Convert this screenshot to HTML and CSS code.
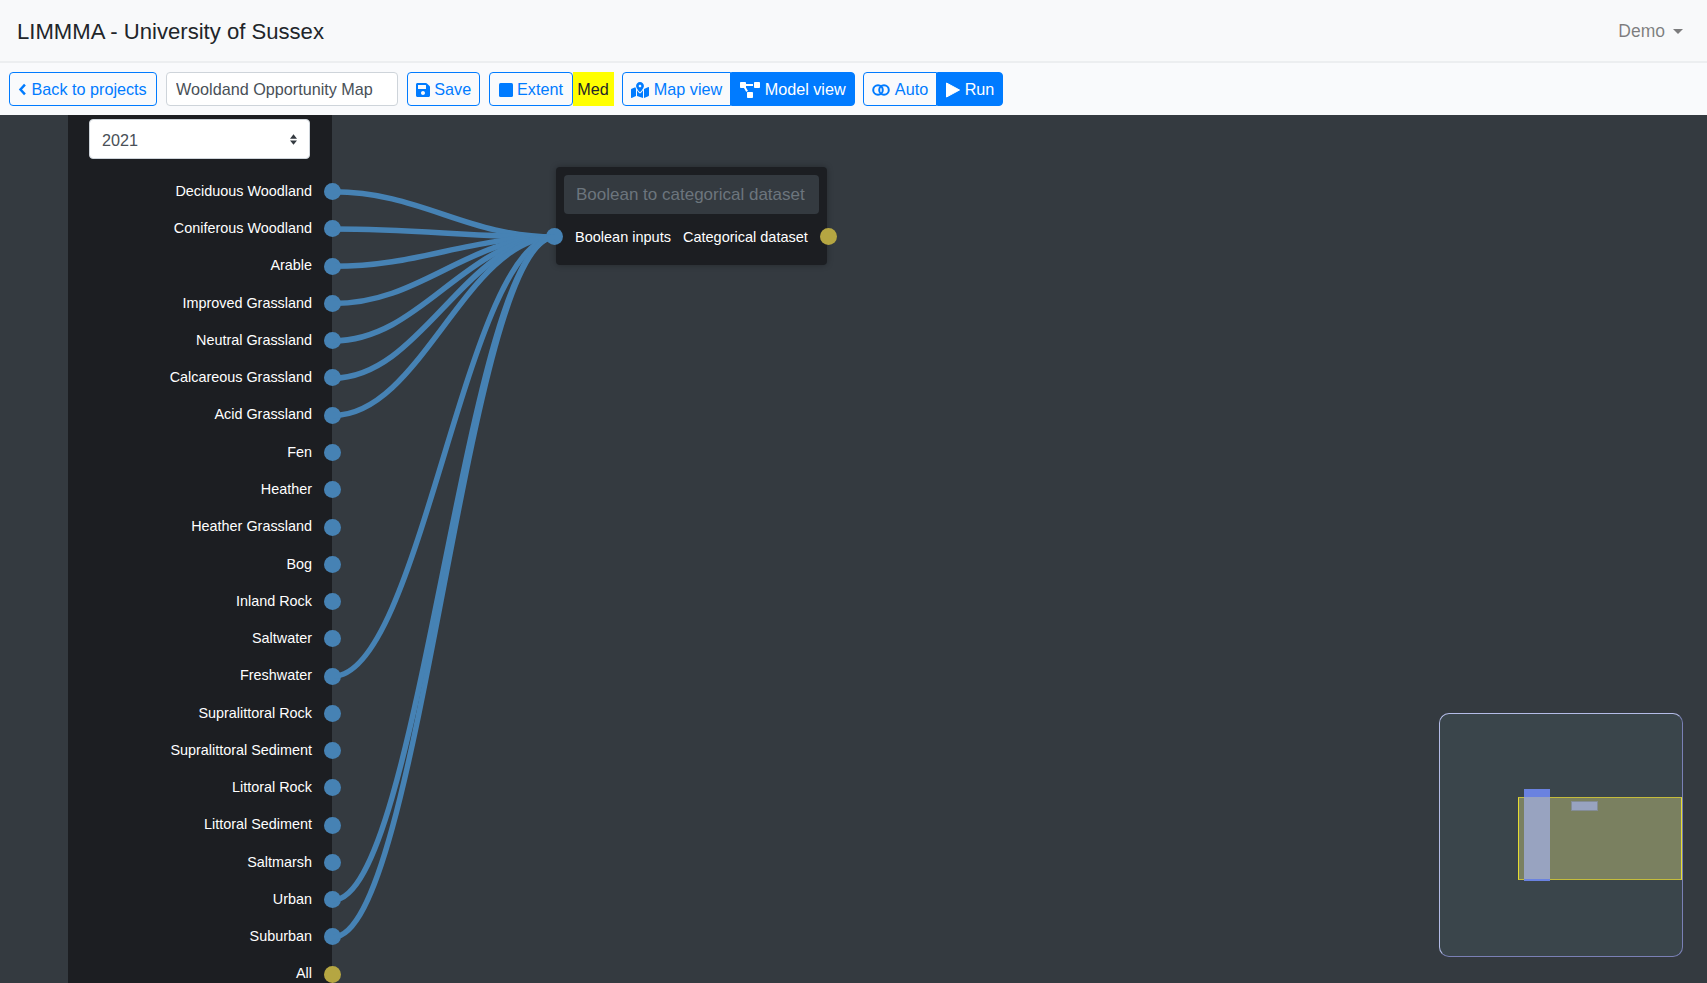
FILE: index.html
```html
<!DOCTYPE html>
<html lang="en">
<head>
    <meta charset="UTF-8">
    <meta name="viewport" content="width=device-width, initial-scale=1.0">
    <title>LIMMMA - University of Sussex</title>
    <link rel="stylesheet" href="styles.css">
</head>
<body>
    <nav class="navbar">
        <a class="brand">LIMMMA - University of Sussex</a>
        <a class="user-menu">Demo <span class="caret"></span></a>
    </nav>

    <div class="toolbar">
        <button class="btn back-btn"><svg class="icon chevron" viewBox="0 0 10 16"><path d="M8 2 2.5 8 8 14" fill="none" stroke="currentColor" stroke-width="3"/></svg>Back to projects</button>
        <input class="name-input" type="text" value="Wooldand Opportunity Map">
        <button class="btn"><svg class="icon" viewBox="0 0 448 512"><path fill="currentColor" d="M433.941 129.941l-83.882-83.882A48 48 0 0 0 316.118 32H48C21.49 32 0 53.49 0 80v352c0 26.51 21.49 48 48 48h352c26.51 0 48-21.49 48-48V163.882a48 48 0 0 0-14.059-33.941zM224 416c-35.346 0-64-28.654-64-64 0-35.346 28.654-64 64-64s64 28.654 64 64c0 35.346-28.654 64-64 64zm96-304.52V212c0 6.627-5.373 12-12 12H76c-6.627 0-12-5.373-12-12V108c0-6.627 5.373-12 12-12h228.52c3.183 0 6.235 1.264 8.485 3.515l3.48 3.48A11.996 11.996 0 0 1 320 111.48z"/></svg>Save</button>
        <div class="extent-group">
            <button class="btn extent-btn"><svg class="icon" viewBox="0 0 14 16"><rect x="0" y="1" width="14" height="14" rx="1.5" fill="currentColor"/></svg>Extent</button>
            <span class="badge-med">Med</span>
        </div>
        <div class="btn-group">
            <button class="btn"><svg class="icon map" viewBox="0 0 576 512"><path fill="currentColor" d="M288 0c-69.59 0-126 56.41-126 126 0 56.26 82.35 158.8 113.9 196.02 6.39 7.54 17.82 7.54 24.2 0C331.65 284.8 414 182.26 414 126 414 56.41 357.59 0 288 0zm0 168c-23.2 0-42-18.8-42-42s18.8-42 42-42 42 18.8 42 42-18.8 42-42 42zM20.12 215.95A32.006 32.006 0 0 0 0 245.66v250.32c0 11.32 11.43 19.06 21.94 14.86L160 448V214.92c-8.84-15.98-16.07-31.54-21.25-46.42L20.12 215.95zM288 359.67c-14.07 0-27.38-6.18-36.51-16.96-19.66-23.2-40.57-49.62-59.49-76.72V448l192 64V266c-18.92 27.09-39.82 53.52-59.49 76.72-9.13 10.77-22.44 16.95-36.51 16.95zm266.06-198.51L416 224v288l139.88-55.95A31.996 31.996 0 0 0 576 426.34V176.02c0-11.32-11.43-19.06-21.94-14.86z"/></svg>Map view</button>
            <button class="btn active"><svg class="icon diagram" viewBox="0 0 640 512"><path fill="currentColor" d="M384 320H256c-17.67 0-32 14.33-32 32v128c0 17.67 14.33 32 32 32h128c17.67 0 32-14.33 32-32V352c0-17.67-14.33-32-32-32zM192 32c0-17.67-14.33-32-32-32H32C14.33 0 0 14.33 0 32v128c0 17.67 14.33 32 32 32h95.72l73.16 128.04C211.98 300.98 232.4 288 256 288h.28L192 175.51V128h224V64H192V32zM608 0H480c-17.67 0-32 14.33-32 32v128c0 17.67 14.33 32 32 32h128c17.67 0 32-14.33 32-32V32c0-17.67-14.33-32-32-32z"/></svg>Model view</button>
        </div>
        <div class="btn-group">
            <button class="btn"><svg class="icon auto" viewBox="0 0 18 12"><circle cx="6" cy="6" r="4.8" fill="none" stroke="currentColor" stroke-width="2"/><circle cx="12" cy="6" r="4.8" fill="none" stroke="currentColor" stroke-width="2"/></svg>Auto</button>
            <button class="btn active"><svg class="icon" viewBox="0 0 14 16"><path fill="currentColor" stroke="currentColor" stroke-width="1" stroke-linejoin="round" d="M.5 1 13.5 8 .5 15z"/></svg>Run</button>
        </div>
    </div>

    <main class="canvas">
        <!-- source node with all the landcover outputs -->
        <section class="source-node">
            <div class="select-wrap">
                <select class="year-select"><option>2021</option></select>
                <svg class="select-arrows" viewBox="0 0 8 12"><path fill="#343a40" d="M4 0 8 5H0zM4 12 0 7h8z"/></svg>
            </div>
            <div class="port-row"><span>Deciduous Woodland</span><i class="dot"></i></div>
            <div class="port-row"><span>Coniferous Woodland</span><i class="dot"></i></div>
            <div class="port-row"><span>Arable</span><i class="dot"></i></div>
            <div class="port-row"><span>Improved Grassland</span><i class="dot"></i></div>
            <div class="port-row"><span>Neutral Grassland</span><i class="dot"></i></div>
            <div class="port-row"><span>Calcareous Grassland</span><i class="dot"></i></div>
            <div class="port-row"><span>Acid Grassland</span><i class="dot"></i></div>
            <div class="port-row"><span>Fen</span><i class="dot"></i></div>
            <div class="port-row"><span>Heather</span><i class="dot"></i></div>
            <div class="port-row"><span>Heather Grassland</span><i class="dot"></i></div>
            <div class="port-row"><span>Bog</span><i class="dot"></i></div>
            <div class="port-row"><span>Inland Rock</span><i class="dot"></i></div>
            <div class="port-row"><span>Saltwater</span><i class="dot"></i></div>
            <div class="port-row"><span>Freshwater</span><i class="dot"></i></div>
            <div class="port-row"><span>Supralittoral Rock</span><i class="dot"></i></div>
            <div class="port-row"><span>Supralittoral Sediment</span><i class="dot"></i></div>
            <div class="port-row"><span>Littoral Rock</span><i class="dot"></i></div>
            <div class="port-row"><span>Littoral Sediment</span><i class="dot"></i></div>
            <div class="port-row"><span>Saltmarsh</span><i class="dot"></i></div>
            <div class="port-row"><span>Urban</span><i class="dot"></i></div>
            <div class="port-row"><span>Suburban</span><i class="dot"></i></div>
            <div class="port-row"><span>All</span><i class="dot gold"></i></div>
        </section>

        <section class="bool-node">
            <input class="node-title" type="text" placeholder="Boolean to categorical dataset">
            <div class="bool-ports">
                <i class="dot"></i>
                <span class="port-in">Boolean inputs</span>
                <span>Categorical dataset</span>
                <i class="dot gold"></i>
            </div>
        </section>

        <!-- wires, in page coordinates -->
        <svg class="wires" viewBox="0 115 1707 868">
            <path d="M333 191.8C421 191.8 466 237 555 237"/>
            <path d="M333 229C421 229 466 237 555 237"/>
            <path d="M333 266.3C421 266.3 466 237 555 237"/>
            <path d="M333 303.6C421 303.6 466 237 555 237"/>
            <path d="M333 340.9C421 340.9 466 237 555 237"/>
            <path d="M333 378.2C421 378.2 466 237 555 237"/>
            <path d="M333 415.4C421 415.4 466 237 555 237"/>
            <path d="M333 676.3C421 676.3 466 237 555 237"/>
            <path d="M333 900C421 900 466 237 555 237"/>
            <path d="M333 937.2C421 937.2 466 237 555 237"/>
        </svg>

        <aside class="minimap">
            <div class="mini-extent"></div>
            <div class="mini-source"></div>
            <div class="mini-bool"></div>
        </aside>
    </main>
</body>
</html>
```

FILE: styles.css
```css
* {
    box-sizing: border-box;
}
html, body {
    height: 100%;
}
body {
    margin: 0;
    font-family: "Liberation Sans", Arial, sans-serif;
    font-size: 16px;
    color: #212529;
    background-color: #343a40;
    display: flex;
    flex-direction: column;
    overflow: hidden;
}
.navbar {
    height: 63px;
    flex: none;
    display: flex;
    align-items: center;
    justify-content: space-between;
    padding: 2px 24px 0 17px;
    background-color: #f8f9fa;
    border-bottom: 2px solid #eceef0;
}
.brand {
    font-size: 22.1px;
    color: #212529;
}
.user-menu {
    font-size: 17.5px;
    color: rgba(0, 0, 0, 0.5);
    display: flex;
    align-items: center;
    gap: 8px;
}
.caret {
    width: 0;
    height: 0;
    border-top: 5px solid rgba(0, 0, 0, 0.5);
    border-left: 5px solid transparent;
    border-right: 5px solid transparent;
}
.toolbar {
    height: 52px;
    flex: none;
    display: flex;
    align-items: center;
    gap: 8.7px;
    padding: 0 9px;
    background-color: #f9fafc;
}
.btn {
    height: 34px;
    padding: 1px 8px 0;
    display: inline-flex;
    align-items: center;
    gap: 4.5px;
    font-family: inherit;
    font-size: 16.2px;
    color: #007bff;
    background-color: transparent;
    border: 1px solid #007bff;
    border-radius: 4px;
}
.btn.back-btn {
    padding-right: 9.7px;
}
.btn.extent-btn {
    padding: 1px 8.7px 0;
}
.btn.active {
    color: #ffffff;
    background-color: #007bff;
}
.icon {
    width: 14px;
    height: 16px;
    flex: none;
}
.icon.chevron {
    width: 9px;
    height: 13px;
}
.icon.map {
    width: 18px;
}
.icon.diagram {
    width: 20px;
}
.icon.auto {
    width: 18px;
    height: 12px;
}
.name-input {
    width: 232px;
    height: 34px;
    padding: 1px 9px 0;
    font-family: inherit;
    font-size: 16.2px;
    color: #495057;
    background-color: #ffffff;
    border: 1px solid #ced4da;
    border-radius: 4px;
}
.extent-group {
    display: flex;
}
.badge-med {
    width: 41px;
    height: 34px;
    display: flex;
    align-items: center;
    justify-content: center;
    font-size: 16.2px;
    background-color: #ffff00;
}
.btn-group {
    display: flex;
}
.btn-group .btn:first-child {
    border-radius: 4px 0 0 4px;
}
.btn-group .btn:last-child {
    border-radius: 0 4px 4px 0;
}
.canvas {
    flex: 1;
    position: relative;
    overflow: hidden;
    background-color: #343a40;
}
.source-node {
    position: absolute;
    left: 68px;
    top: 0;
    width: 263.5px;
    height: 900px;
    padding-top: 4px;
    background-color: #1c1e22;
}
.select-wrap {
    position: relative;
    width: 221px;
    height: 40px;
    margin: 0 0 14px 21px;
}
.year-select {
    width: 100%;
    height: 100%;
    padding: 2px 12px 0;
    appearance: none;
    font-family: inherit;
    font-size: 16.2px;
    color: #495057;
    background-color: #ffffff;
    border: 1px solid #ced4da;
    border-radius: 4px;
}
.select-arrows {
    position: absolute;
    right: 13px;
    top: 15px;
    width: 7px;
    height: 11px;
}
.port-row {
    height: 37.27px;
    display: flex;
    align-items: center;
    justify-content: flex-end;
    gap: 12px;
    margin-right: -9.5px;
    font-size: 14.4px;
    color: #ffffff;
}
.port-row span {
    padding-bottom: 1.5px;
}
.dot {
    width: 17px;
    height: 17px;
    flex: none;
    border-radius: 50%;
    background-color: #4682b4;
}
.dot.gold {
    background-color: #b5a642;
}
.bool-node {
    position: absolute;
    left: 556px;
    top: 52px;
    width: 271px;
    height: 98px;
    padding: 8px 8px 0;
    background-color: #1c1e22;
    border-radius: 4px;
    box-shadow: 0 0 6px rgba(0, 0, 0, 0.3);
}
.node-title {
    width: 255px;
    height: 39px;
    padding: 0 12px;
    font-family: inherit;
    font-size: 17px;
    background-color: #343a40;
    border: none;
    border-radius: 4px;
}
.node-title::placeholder {
    color: #6c757d;
}
.bool-ports {
    display: flex;
    align-items: center;
    gap: 12px;
    margin: 14px -17.5px 0 -18px;
    font-size: 14.5px;
    color: #ffffff;
    white-space: nowrap;
}
.port-in {
    margin-right: auto;
}
.wires {
    position: absolute;
    inset: 0;
    width: 1707px;
    height: 868px;
    pointer-events: none;
}
.wires path {
    fill: none;
    stroke: #4682b4;
    stroke-width: 5.5px;
}
.minimap {
    position: absolute;
    left: 1439px;
    top: 598px;
    width: 244px;
    height: 244px;
    background-color: #3a454b;
    border: 1px solid;
    border-color: #b4bce8 #7a80b5 #7a80b5 #b4bce8;
    border-radius: 10px;
}
.mini-extent {
    position: absolute;
    left: 78px;
    top: 83px;
    width: 164px;
    height: 83px;
    background-color: #7a8060;
    border: 1px solid;
    border-color: #c4bc3c #e6dc30;
}
.mini-source {
    position: absolute;
    left: 84px;
    top: 75px;
    width: 26px;
    height: 92px;
    background: linear-gradient(#6a82e0 8px, #98a3c0 8px, #98a3c0 90px, #6a82e0 90px);
}
.mini-bool {
    position: absolute;
    left: 131px;
    top: 87px;
    width: 27px;
    height: 10px;
    background-color: #98a3c0;
    border: 1px solid #838c95;
}
```
